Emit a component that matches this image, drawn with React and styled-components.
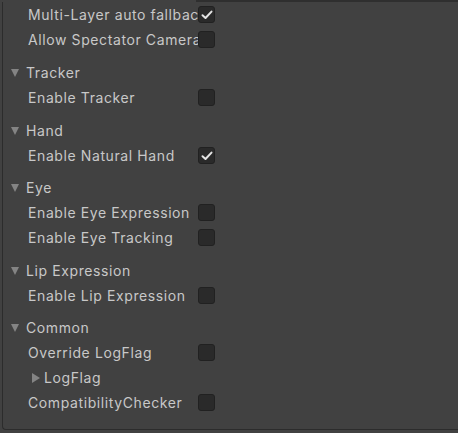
import React from 'react';
import styled, { createGlobalStyle } from 'styled-components';

const GlobalStyle = createGlobalStyle`
  html, body {
    margin: 0;
    padding: 0;
    background: #414141;
  }
  body {
    width: 458px;
    height: 433px;
    overflow: hidden;
    font-family: Inter, "Noto Sans", sans-serif;
  }
`

const groups = [
  { title: null, gap: 0, rows: [
    { label: 'Multi-Layer auto fallback', checked: true },
    { label: 'Allow Spectator Camera', checked: false },
  ] },
  { title: 'Tracker', gap: 8, rows: [{ label: 'Enable Tracker', checked: false }] },
  { title: 'Hand', gap: 8, rows: [{ label: 'Enable Natural Hand', checked: true }] },
  { title: 'Eye', gap: 7, rows: [
    { label: 'Enable Eye Expression', checked: false },
    { label: 'Enable Eye Tracking', checked: false },
  ] },
  { title: 'Lip Expression', gap: 8, rows: [{ label: 'Enable Lip Expression', checked: false }] },
  { title: 'Common', gap: 7, rows: [
    { label: 'Override LogFlag', checked: false },
    { label: 'LogFlag', foldout: true },
    { label: 'CompatibilityChecker', checked: false },
  ] },
];

function App() {
  return (
    <>
      <GlobalStyle />
      <Page>
        <TopEdge />
        <Panel>
          {groups.map((group, gi) => (
            <Group key={gi} gap={group.gap}>
              {group.title && (
                <Header>
                  <DownArrow />
                  <span>{group.title}</span>
                </Header>
              )}
              {group.rows.map((row, ri) =>
                row.foldout ? (
                  <Row key={ri}>
                    <SubFold>
                      <RightArrow />
                      <span>{row.label}</span>
                    </SubFold>
                  </Row>
                ) : (
                  <Row key={ri}>
                    <Label title={row.label}>{row.label}</Label>
                    <Toggle>
                      {row.checked && (
                        <svg width="12" height="10" viewBox="0 0 12 10">
                          <path d="M1.5 5.2 L4.5 8 L10.5 1.6" fill="none" stroke="#e4e4e4" strokeWidth="2" strokeLinecap="round" strokeLinejoin="round" />
                        </svg>
                      )}
                    </Toggle>
                  </Row>
                )
              )}
            </Group>
          ))}
        </Panel>
      </Page>
    </>
  )
}
export default App;

const Page = styled.div`
  display: flex;
  flex-direction: column;
  height: 433px;
`

const TopEdge = styled.div`
  height: 2px;
  margin-left: 196px;
  background: #2f2f2f;
`

const Panel = styled.div`
  margin-left: 2px;
  height: 427px;
  border-left: 1px solid #2c2c2c;
  border-bottom: 1px solid #2c2c2c;
  border-bottom-left-radius: 4px;
  display: flex;
  flex-direction: column;
`

const Group = styled.div`
  display: flex;
  flex-direction: column;
  margin-top: ${props => props.gap}px;
`

const Header = styled.div`
  height: 25px;
  display: flex;
  align-items: center;
  color: #c8c8c8;
  font-size: 14px;
  letter-spacing: 0.6px;
  padding-left: 8px;
  span{
    margin-left: 7px;
  }
`

const DownArrow = styled.div`
  width: 0;
  height: 0;
  border-left: 4.5px solid transparent;
  border-right: 4.5px solid transparent;
  border-top: 8px solid #848484;
`

const RightArrow = styled.div`
  width: 0;
  height: 0;
  border-top: 5px solid transparent;
  border-bottom: 5px solid transparent;
  border-left: 8px solid #848484;
`

const Row = styled.div`
  height: 25px;
  display: flex;
  align-items: center;
  padding-left: 25px;
`

const Label = styled.div`
  width: 170px;
  flex: none;
  overflow: hidden;
  white-space: nowrap;
  color: #c8c8c8;
  font-size: 14px;
  letter-spacing: 0.6px;
`

const SubFold = styled.div`
  display: flex;
  align-items: center;
  color: #c8c8c8;
  font-size: 14px;
  letter-spacing: 0.6px;
  padding-left: 4px;
  span{
    margin-left: 4px;
  }
`

const Toggle = styled.div`
  width: 15px;
  height: 15px;
  border: 1px solid #212121;
  border-radius: 3px;
  background: #2a2a2a;
  display: flex;
  align-items: center;
  justify-content: center;
`
